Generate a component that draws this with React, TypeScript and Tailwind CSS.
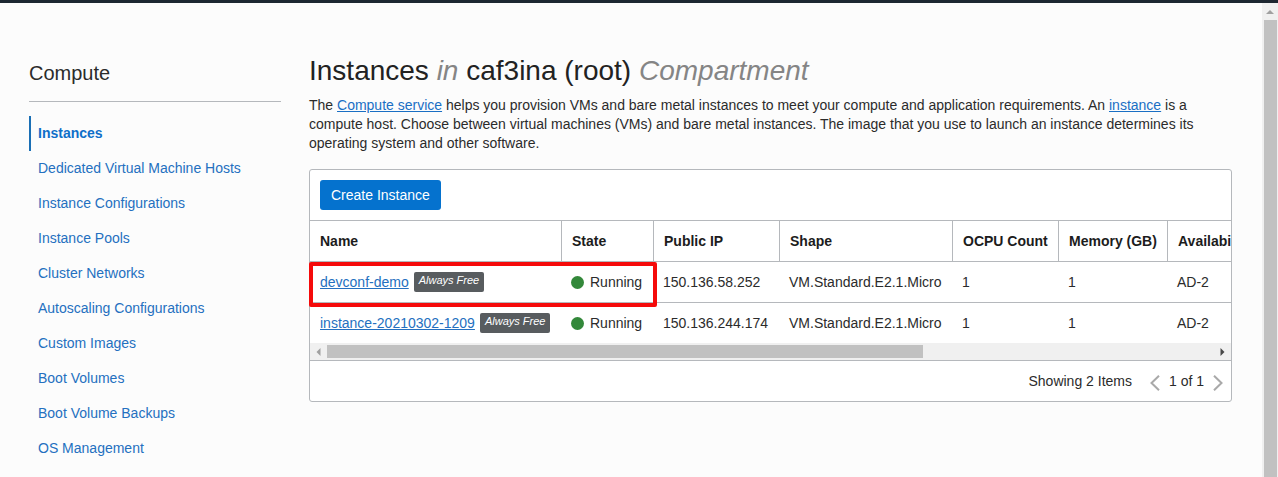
import React from "react";

const navItems: string[] = [
  "Instances",
  "Dedicated Virtual Machine Hosts",
  "Instance Configurations",
  "Instance Pools",
  "Cluster Networks",
  "Autoscaling Configurations",
  "Custom Images",
  "Boot Volumes",
  "Boot Volume Backups",
  "OS Management",
];

interface Instance {
  name: string;
  state: string;
  ip: string;
  shape: string;
  ocpu: number;
  memory: number;
  domain: string;
}

const instances: Instance[] = [
  { name: "devconf-demo", state: "Running", ip: "150.136.58.252", shape: "VM.Standard.E2.1.Micro", ocpu: 1, memory: 1, domain: "AD-2" },
  { name: "instance-20210302-1209", state: "Running", ip: "150.136.244.174", shape: "VM.Standard.E2.1.Micro", ocpu: 1, memory: 1, domain: "AD-2" },
];

const columns: { label: string; width: string }[] = [
  { label: "Name", width: "w-[251px]" },
  { label: "State", width: "w-[92px]" },
  { label: "Public IP", width: "w-[126px]" },
  { label: "Shape", width: "w-[173px]" },
  { label: "OCPU Count", width: "w-[106px]" },
  { label: "Memory (GB)", width: "w-[109px]" },
  { label: "Availability Domain", width: "w-[561px]" },
];

function Sidebar() {
  return (
    <aside className="w-[252px] shrink-0">
      <h2 className="pt-14 text-[20px] leading-7">Compute</h2>
      <nav aria-label="Compute" className="mt-[14px] border-t border-[#b5b8bc] pt-[14px]">
        <ul className="flex flex-col">
          {navItems.map((item, i) => (
            <li key={item} className="h-[35px]">
              <a
                href="#"
                aria-current={i === 0 ? "page" : undefined}
                className={
                  i === 0
                    ? "block h-[35px] border-l-2 border-[#1a6fb5] pl-[7px] leading-[35px] font-bold text-[#0f6fc9]"
                    : "block pl-[9px] leading-[35px] text-[#2470c0]"
                }
              >
                {item}
              </a>
            </li>
          ))}
        </ul>
      </nav>
    </aside>
  );
}

function InstanceTable() {
  return (
    <div className="overflow-hidden">
      <table className="w-[1418px] table-fixed border-separate border-spacing-0 text-left">
        <thead>
          <tr className="h-[42px]">
            {columns.map((c) => (
              <th
                key={c.label}
                scope="col"
                className={`${c.width} border-y border-l border-[#b5b8bc] px-[10px] py-0 font-bold whitespace-nowrap text-[#1c1c1c] first:border-l-0`}
              >
                {c.label}
              </th>
            ))}
          </tr>
        </thead>
        <tbody className="[&_td]:border-b [&_td]:border-[#b5b8bc] [&_td]:px-[10px] [&_td]:py-0 [&_tr:last-child_td]:border-b-0">
          {instances.map((row) => (
            <tr key={row.name} className="h-[41px] whitespace-nowrap last:h-10">
              <td>
                <div className="flex items-center gap-[5px]">
                  <a href="#" className="text-[#2470c0] underline underline-offset-1">{row.name}</a>
                  <span className="h-5 rounded-[2px] bg-[#585c5f] px-[5px] text-[11px] leading-[17px] text-white italic">Always Free</span>
                </div>
              </td>
              <td>
                <div className="flex items-center gap-[6px]">
                  <span className="size-[13px] shrink-0 rounded-full bg-[#33883a]" />
                  {row.state}
                </div>
              </td>
              <td>{row.ip}</td>
              <td>{row.shape}</td>
              <td>{row.ocpu}</td>
              <td>{row.memory}</td>
              <td>{row.domain}</td>
            </tr>
          ))}
        </tbody>
      </table>
    </div>
  );
}

function HorizontalScrollbar() {
  return (
    <div className="flex h-[17px] items-center justify-between bg-[#f0f0f0] px-[6px]">
      <svg width="5" height="8" viewBox="0 0 5 8" aria-hidden="true">
        <path d="M4.5 0v8L.5 4z" fill="#a0a0a0" />
      </svg>
      <div className="mx-[6px] h-[13px] flex-1">
        <div className="h-full w-[67.2%] bg-[#c1c1c1]" />
      </div>
      <svg width="5" height="8" viewBox="0 0 5 8" aria-hidden="true">
        <path d="M.5 0v8l4-4z" fill="#484848" />
      </svg>
    </div>
  );
}

function VerticalScrollbar() {
  return (
    <div className="flex w-4 shrink-0 flex-col items-center bg-[#f0f0f0] pt-[7px]">
      <svg width="8" height="4" viewBox="0 0 8 4" aria-hidden="true">
        <path d="M0 4h8L4 0z" fill="#a0a0a0" />
      </svg>
      <div className="mt-[6px] w-[13px] flex-1 bg-[#c1c1c1]" />
    </div>
  );
}

export default function App() {
  return (
    <div className="flex min-h-screen flex-col border-t-[3px] border-[#1d2731] bg-[#fcfcfc] font-['Liberation_Sans',Arial,sans-serif] text-[14px] leading-[19px] text-[#2b2b2b]">
      <div className="flex flex-1">
        <div className="flex min-w-0 flex-1 gap-7 pr-[30px] pl-[29px]">
          <Sidebar />
          <main className="min-w-0 flex-1">
            <h1 className="pt-[50px] text-[28px] leading-9 text-[#222]">
              Instances <em className="text-[#858585]">in</em> caf3ina (root) <em className="text-[#858585]">Compartment</em>
            </h1>
            <p className="mt-[7px]">
              The <a href="#" className="text-[#1a6fc4] underline underline-offset-1">Compute service</a> helps you provision VMs and bare metal instances to
              meet your compute and application requirements. An{" "}
              <a href="#" className="text-[#1a6fc4] underline underline-offset-1">instance</a> is a compute host. Choose between virtual machines (VMs) and
              bare metal instances. The image that you use to launch an instance determines its operating system and other software.
            </p>
            <section aria-label="Instances" className="relative mt-4 rounded-[3px] border border-[#b5b8bc] bg-white">
              <div className="p-[10px]">
                <button type="button" className="h-[30px] rounded-[3px] bg-[#0572ce] px-[11px] text-white">
                  Create Instance
                </button>
              </div>
              <InstanceTable />
              <HorizontalScrollbar />
              <div className="flex h-[41px] items-center justify-end border-t border-[#b5b8bc] pr-2">
                <span>Showing 2 Items</span>
                <button type="button" aria-label="Previous page" className="ml-[18px] pt-[3px]">
                  <svg className="block" width="10" height="16" viewBox="0 0 10 16" fill="none" stroke="#a9a9a9" strokeWidth="2" aria-hidden="true">
                    <path d="M9 .8L1.500 8L9 15.200" />
                  </svg>
                </button>
                <span className="mx-[9px]">1 of 1</span>
                <button type="button" aria-label="Next page" className="pt-[3px]">
                  <svg className="block" width="10" height="16" viewBox="0 0 10 16" fill="none" stroke="#a9a9a9" strokeWidth="2" aria-hidden="true">
                    <path d="M1 .8L8.500 8L1 15.200" />
                  </svg>
                </button>
              </div>
              <div className="pointer-events-none absolute top-[92px] -left-px h-[45px] w-[348px] rounded-[2px] border-4 border-[#f50a0a]" />
            </section>
          </main>
        </div>
        <VerticalScrollbar />
      </div>
    </div>
  );
}
